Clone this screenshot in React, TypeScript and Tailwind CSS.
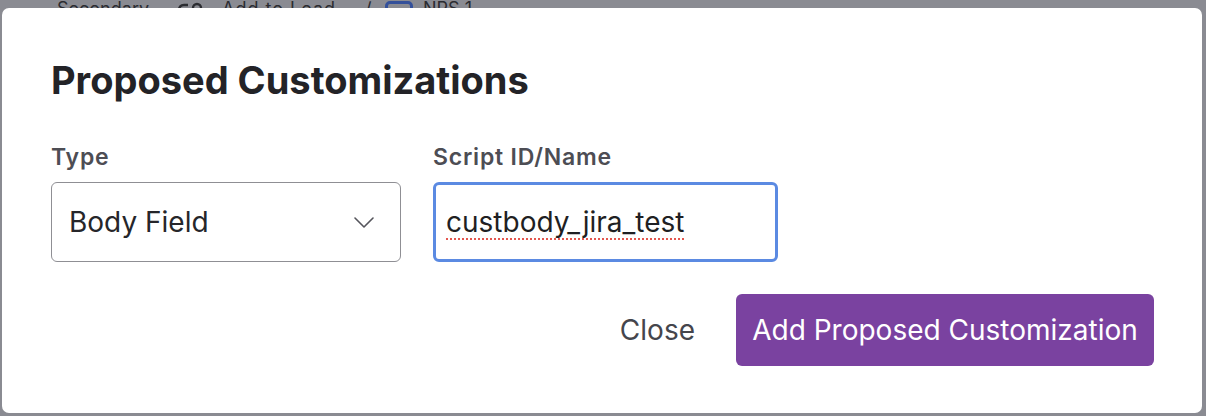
import React from "react";

export default function App() {
  return (
    <div
      className="relative w-[1206px] h-[416px] overflow-hidden bg-[#8a8b92]"
      style={{ fontFamily: "Inter, 'Noto Sans', sans-serif" }}
    >
      {/* page content behind the dimmed overlay */}
      <div className="flex items-start pl-[57px] -mt-[2px] h-[22px] text-[18px] leading-[22px] text-[#2b2c31]">
        <span className="w-[118px]">Secondary</span>
        <span className="w-[47px] pt-[3px]">
          <svg width="32" height="22" viewBox="0 0 32 22" fill="none" stroke="#2b2c31" strokeWidth="2.4">
            <path d="M4 22 L4 9 Q4 4 9 4 L13 4" />
            <circle cx="22" cy="7" r="4" />
            <path d="M19 11 L15 19" />
          </svg>
        </span>
        <span className="w-[143px] tracking-[1px]">Add to Lead</span>
        <span className="w-[20px]">/</span>
        <span className="mt-[3px] mr-[10px] w-[28px] h-[22px] rounded-[5px] border-[3px] border-[#34509a]" />
        <span>NPS 1</span>
      </div>

      {/* modal */}
      <div className="absolute left-[2px] top-[8px] w-[1200px] h-[405px] rounded-[7px] bg-white pt-[52px] pl-[49px] pr-[48px]">
        <h2 className="text-[38px] leading-[40px] font-bold text-[#232327]">
          Proposed Customizations
        </h2>

        <div className="mt-[42px] flex gap-[32px]">
          <div className="flex flex-col gap-[10px]">
            <label className="text-[23px] leading-[30px] font-semibold tracking-[0.8px] text-[#4d4d54]">Type</label>
            <div className="flex h-[80px] w-[350px] items-center justify-between rounded-[6px] border-[1.5px] border-[#8f8f94] pl-[17px] pr-[26px] text-[28px] text-[#26262a]">
              <span>Body Field</span>
              <svg width="20" height="11" viewBox="0 0 20 11" fill="none" stroke="#55555c" strokeWidth="1.6" strokeLinecap="round" strokeLinejoin="round">
                <path d="M1 1 L10 10 L19 1" />
              </svg>
            </div>
          </div>

          <div className="flex flex-col gap-[10px]">
            <label className="text-[23px] leading-[30px] font-semibold tracking-[0.8px] text-[#4d4d54]">Script ID/Name</label>
            <div className="flex h-[80px] w-[345px] items-center rounded-[6px] border-[3px] border-[#5b8ae2] pl-[10px] text-[28px] text-[#1f1f23]">
              <span className="underline decoration-dotted decoration-[#e4574f] decoration-[2px] underline-offset-[6px]">
                custbody_jira_test
              </span>
            </div>
          </div>
        </div>

        <div className="mt-[32px] flex items-center justify-end gap-[41px]">
          <button className="text-[28px] text-[#45454c]">Close</button>
          <button className="flex h-[72px] w-[418px] items-center justify-center rounded-[6px] bg-[#7a42a0] text-[28px] text-white">
            Add Proposed Customization
          </button>
        </div>
      </div>
    </div>
  );
}
